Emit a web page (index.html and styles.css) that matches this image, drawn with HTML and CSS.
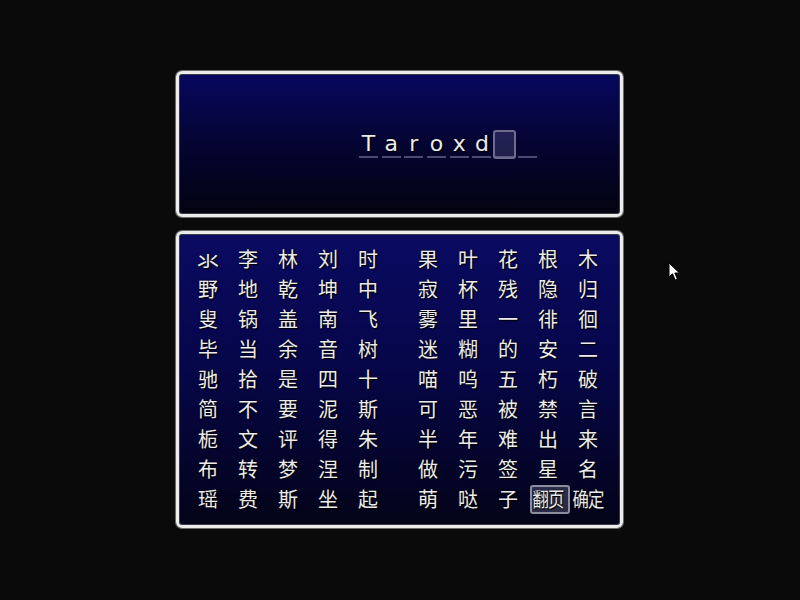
FILE: index.html
```html
<!DOCTYPE html>
<html lang="zh-CN">
<head>
<meta charset="utf-8">
<title>Name Input</title>
<link rel="stylesheet" href="styles.css">
</head>
<body>
<div class="screen">
  <div class="win win-name">
    <div class="name-row">
      <span class="slot">T</span>
      <span class="slot">a</span>
      <span class="slot">r</span>
      <span class="slot">o</span>
      <span class="slot">x</span>
      <span class="slot">d</span>
      <span class="slot slot-cur"></span>
      <span class="slot"></span>
    </div>
  </div>
  <div class="win win-chars">
    <div class="group">
      <span class="big">氺</span><span>李</span><span>林</span><span>刘</span><span>时</span>
      <span>野</span><span>地</span><span>乾</span><span>坤</span><span>中</span>
      <span>叟</span><span>锅</span><span>盖</span><span>南</span><span>飞</span>
      <span>毕</span><span>当</span><span>余</span><span>音</span><span>树</span>
      <span>驰</span><span>拾</span><span>是</span><span>四</span><span>十</span>
      <span>简</span><span>不</span><span>要</span><span>泥</span><span>斯</span>
      <span>栀</span><span>文</span><span>评</span><span>得</span><span>朱</span>
      <span>布</span><span>转</span><span>梦</span><span>涅</span><span>制</span>
      <span>瑶</span><span>费</span><span>斯</span><span>坐</span><span>起</span>
    </div>
    <div class="group">
      <span>果</span><span>叶</span><span>花</span><span>根</span><span>木</span>
      <span>寂</span><span>杯</span><span>残</span><span>隐</span><span>归</span>
      <span>雾</span><span>里</span><span>一</span><span>徘</span><span>徊</span>
      <span>迷</span><span>糊</span><span>的</span><span>安</span><span>二</span>
      <span>喵</span><span>呜</span><span>五</span><span>朽</span><span>破</span>
      <span>可</span><span>恶</span><span>被</span><span>禁</span><span>言</span>
      <span>半</span><span>年</span><span>难</span><span>出</span><span>来</span>
      <span>做</span><span>污</span><span>签</span><span>星</span><span>名</span>
      <span>萌</span><span>哒</span><span>子</span><span class="cmd selected"><b>翻页</b></span><span class="cmd"><b>确定</b></span>
    </div>
  </div>
  <svg class="pointer" width="14" height="20" viewBox="0 0 14 20">
    <path d="M1 1 L1 15 L4.5 11.8 L7.2 18 L9.4 17 L6.8 11 L11.5 11 Z" fill="#ffffff" stroke="#000000" stroke-width="1" stroke-linejoin="round"/>
  </svg>
</div>
</body>
</html>
```

FILE: styles.css
```css
html, body {
  margin: 0;
  padding: 0;
  background: #0a0a0a;
}

.screen {
  position: relative;
  width: 800px;
  height: 600px;
  box-sizing: border-box;
  padding: 71px 0 0 176px;
  background: #0a0a0a;
  overflow: hidden;
}

.win {
  width: 447px;
  box-sizing: border-box;
  border: 3px solid #ececec;
  border-radius: 6px;
  box-shadow: 0 0 0 1px #6a6a6a, inset 0 0 0 1px #3a3a4a;
  color: #ebebeb;
  text-shadow: 1px 1px 1px #000, 0 0 2px rgba(0, 0, 0, 0.8);
}

.win-name {
  height: 146px;
  padding: 57px 0 0 180px;
  background: linear-gradient(to bottom, #07075f 0%, #040432 50%, #030310 100%);
}

.name-row {
  display: flex;
}

.slot {
  position: relative;
  width: 19px;
  height: 25px;
  margin-right: 3.7px;
  border-bottom: 2px solid #4a4a74;
  font-family: "DejaVu Sans", "Open Sans", sans-serif;
  font-size: 22px;
  line-height: 25px;
  text-align: center;
}

.slot-cur::after {
  content: "";
  position: absolute;
  left: -2px;
  right: -2px;
  top: -1px;
  bottom: -3px;
  border: 2px solid #6c6c8e;
  border-radius: 3px;
  background: rgba(110, 110, 160, 0.28);
}

.win-chars {
  height: 297px;
  margin-top: 14px;
  padding: 10px 0 0 9px;
  display: flex;
  gap: 20px;
  background: linear-gradient(to bottom, #0a0a62 0%, #06064a 45%, #030318 100%);
}

.group {
  display: grid;
  grid-template-columns: repeat(5, 40px);
  grid-auto-rows: 30px;
  font-family: "Noto Sans CJK SC", "Noto Sans", sans-serif;
  font-size: 20px;
  line-height: 30px;
  text-align: center;
}

.group span {
  position: relative;
}

.group .big {
  font-family: "Noto Sans CJK JP", "Noto Sans CJK SC", sans-serif;
  font-size: 22px;
  line-height: 30px;
}

.cmd b {
  display: inline-block;
  font-weight: normal;
  transform: scaleX(0.82);
  transform-origin: center;
  white-space: nowrap;
  position: relative;
  z-index: 1;
}

.cmd {
  letter-spacing: -1px;
}

.selected::before {
  content: "";
  position: absolute;
  left: 2px;
  right: -2px;
  top: 1px;
  bottom: 0;
  border: 2px solid #8c8c9c;
  border-radius: 3px;
  background: rgba(140, 140, 170, 0.3);
}

.pointer {
  position: absolute;
  left: 668px;
  top: 262px;
}
```
